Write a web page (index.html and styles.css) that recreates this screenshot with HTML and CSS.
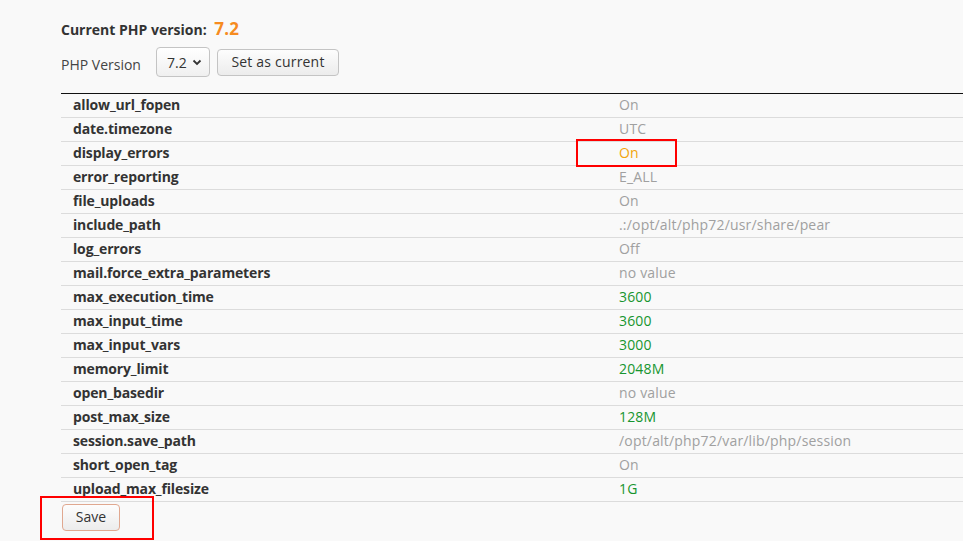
FILE: index.html
```html
<!DOCTYPE html>
<html>
<head>
<meta charset="utf-8">
<link rel="stylesheet" href="styles.css">
</head>
<body>
<div class="page">
  <div class="current">Current PHP version: <span class="ver">7.2</span></div>
  <div class="chooser">
    <span class="label">PHP Version</span>
    <div class="select">7.2 <svg width="10" height="7" viewBox="0 0 10 7"><path d="M1.5 1.5 L5 5 L8.5 1.5" fill="none" stroke="#333" stroke-width="1.8"/></svg></div>
    <button class="btn set">Set as current</button>
  </div>
  <div class="table">
    <div class="row"><div class="name">allow_url_fopen</div><div class="val">On</div></div>
    <div class="row"><div class="name">date.timezone</div><div class="val">UTC</div></div>
    <div class="row"><div class="name">display_errors</div><div class="val warn">On</div></div>
    <div class="row"><div class="name">error_reporting</div><div class="val">E_ALL</div></div>
    <div class="row"><div class="name">file_uploads</div><div class="val">On</div></div>
    <div class="row"><div class="name">include_path</div><div class="val">.:/opt/alt/php72/usr/share/pear</div></div>
    <div class="row"><div class="name">log_errors</div><div class="val">Off</div></div>
    <div class="row"><div class="name">mail.force_extra_parameters</div><div class="val">no value</div></div>
    <div class="row"><div class="name">max_execution_time</div><div class="val ok">3600</div></div>
    <div class="row"><div class="name">max_input_time</div><div class="val ok">3600</div></div>
    <div class="row"><div class="name">max_input_vars</div><div class="val ok">3000</div></div>
    <div class="row"><div class="name">memory_limit</div><div class="val ok">2048M</div></div>
    <div class="row"><div class="name">open_basedir</div><div class="val">no value</div></div>
    <div class="row"><div class="name">post_max_size</div><div class="val ok">128M</div></div>
    <div class="row"><div class="name">session.save_path</div><div class="val">/opt/alt/php72/var/lib/php/session</div></div>
    <div class="row"><div class="name">short_open_tag</div><div class="val">On</div></div>
    <div class="row"><div class="name">upload_max_filesize</div><div class="val ok">1G</div></div>
  </div>
  <div class="actions"><button class="btn save">Save</button></div>
</div>
<div class="mark mark-val"></div>
<div class="mark mark-save"></div>
</body>
</html>
```
FILE: styles.css
```css
html, body {
  margin: 0;
  padding: 0;
  background: #f9f9f9;
  font-family: "Open Sans", "Noto Sans", sans-serif;
  font-size: 14px;
  color: #333;
  overflow: hidden;
}
.page {
  padding: 19px 0 0 61px;
}
.current {
  font-weight: bold;
  line-height: 20px;
  height: 20px;
  color: #333;
}
.ver {
  color: #f68b1f;
  font-size: 17px;
  margin-left: 4px;
  letter-spacing: 0.2px;
}
.chooser {
  display: flex;
  align-items: center;
  margin-top: 8px;
  height: 30px;
}
.label {
  width: 95px;
  padding-top: 4px;
  color: #444;
}
.select {
  box-sizing: border-box;
  width: 54px;
  height: 30px;
  border: 1px solid #c4c4c4;
  border-radius: 4px;
  background: linear-gradient(#fff, #f0f0f0);
  display: flex;
  align-items: center;
  gap: 5px;
  padding-left: 10px;
  color: #333;
}
.btn {
  box-sizing: border-box;
  font-family: "Open Sans", "Noto Sans", sans-serif;
  font-size: 14px;
  color: #333;
  background: linear-gradient(#fdfdfd, #ececec);
  border: 1px solid #c4c4c4;
  border-radius: 4px;
  padding: 0 0 2px 0;
}
.set {
  width: 122px;
  height: 27px;
  margin-left: 7px;
  letter-spacing: 0.2px;
}
.table {
  margin-top: 16px;
  border-top: 1px solid #111;
}
.row {
  display: grid;
  grid-template-columns: 558px 1fr;
  height: 24px;
  box-sizing: border-box;
  border-bottom: 1px solid #dcdcdc;
  align-items: center;
  padding-bottom: 2px;
}
.name {
  padding-left: 12px;
  font-weight: bold;
  color: #333;
  letter-spacing: -0.15px;
}
.val {
  color: #a0a0a0;
  letter-spacing: 0.18px;
}
.val.warn { color: #f2a50c; }
.val.ok { color: #17952f; }
.actions {
  padding: 2px 0 0 1px;
}
.save {
  width: 58px;
  height: 27px;
  border-color: #e0a890;
}
.mark {
  position: absolute;
  border: 2px solid #ff0000;
  box-sizing: border-box;
}
.mark-val {
  left: 576px;
  top: 139px;
  width: 101px;
  height: 28px;
}
.mark-save {
  left: 40px;
  top: 496px;
  width: 114px;
  height: 44px;
}
```
